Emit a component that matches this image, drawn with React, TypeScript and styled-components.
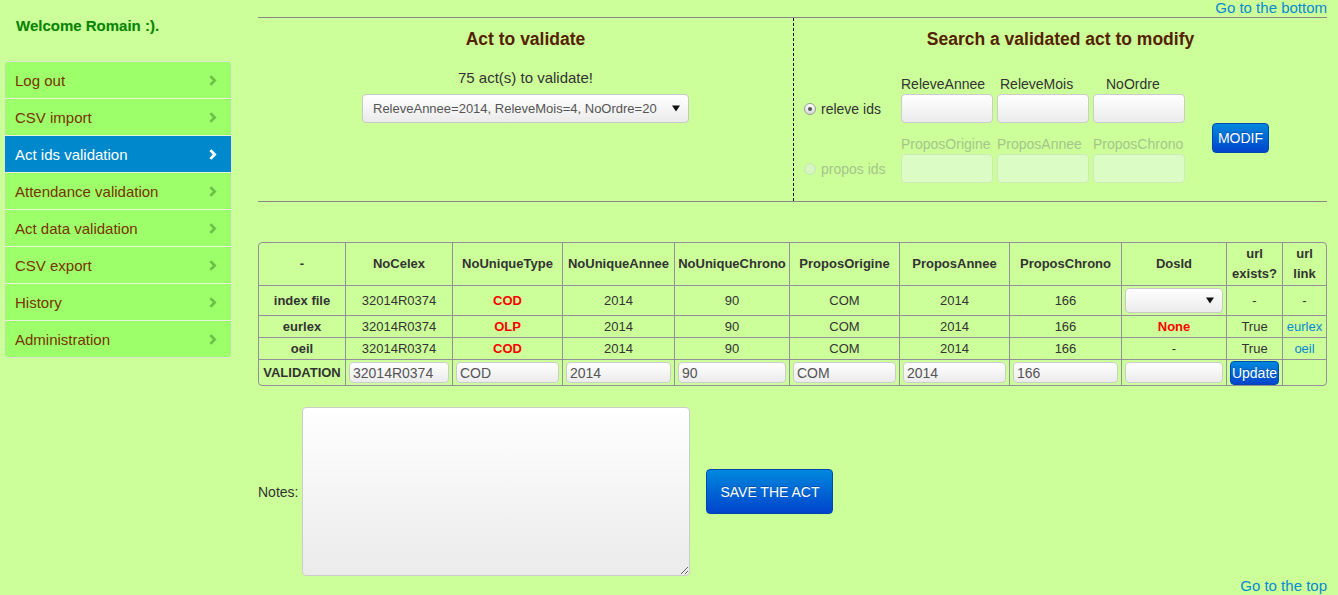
import React from 'react';
import styled, { createGlobalStyle } from 'styled-components';

const GlobalStyle = createGlobalStyle`
  html, body { margin: 0; padding: 0; background: #ccff99; }
  body {
    font-family: "Liberation Sans", Arial, sans-serif;
    font-size: 14px;
    color: #333;
  }
  *, *::before, *::after { box-sizing: border-box; }
`;

const Page = styled.div`
  display: flex;
  align-items: flex-start;
  width: 1338px;
  min-height: 595px;
`;

/* ---------- Sidebar ---------- */
const Sidebar = styled.aside`
  width: 228px;
  margin-left: 4px;
  flex-shrink: 0;
`;

const Welcome = styled.div`
  margin: 16px 0 0 12px;
  height: 20px;
  line-height: 20px;
  font-size: 15px;
  font-weight: bold;
  color: #0b820b;
  text-shadow: 0 0 1px rgba(120, 220, 80, 0.6);
`;

const Nav = styled.nav`
  margin-top: 25px;
  border: 1px solid #dde6d2;
  border-radius: 4px;
  overflow: hidden;
`;

const NavItem = styled.a<{ $active?: boolean }>`
  display: flex;
  align-items: center;
  justify-content: space-between;
  height: 37px;
  padding: 0 14px 0 10px;
  border-top: 1px solid #e6f7d8;
  background: ${(p) => (p.$active ? '#0088cc' : '#9dff6a')};
  color: ${(p) => (p.$active ? '#ffffff' : '#773300')};
  font-size: 15px;
  text-decoration: none;
  cursor: pointer;
  &:first-child {
    border-top: none;
    height: 36px;
  }
`;

const Chevron = ({ color }: { color: string }) => (
  <svg width="8" height="11" viewBox="0 0 8 11" aria-hidden="true">
    <path d="M0.4 2.1 L2.4 0.2 L7.6 5.5 L2.4 10.8 L0.4 8.9 L3.7 5.5 Z" fill={color} />
  </svg>
);

/* ---------- Main ---------- */
const Main = styled.main`
  margin-left: 26px;
  width: 1069px;
  flex-shrink: 0;
`;

const TopLinkRow = styled.div`
  height: 17px;
  text-align: right;
  line-height: 15px;
`;

const Link = styled.a`
  color: #0a8ad2;
  font-size: 15px;
  text-decoration: none;
  cursor: pointer;
`;

const SearchSection = styled.section`
  display: grid;
  grid-template-columns: 535px 1fr;
  height: 185px;
  border-top: 1px solid #888;
  border-bottom: 1px solid #888;
`;

const LeftCol = styled.div`
  padding-top: 11px;
  text-align: center;
`;

const RightCol = styled.div`
  padding-top: 11px;
  border-left: 1px dashed #111;
`;

const Heading = styled.h3`
  margin: 0;
  font-size: 17.5px;
  line-height: 20px;
  font-weight: bold;
  color: #552200;
  text-align: center;
`;

const Count = styled.p`
  margin: 20px 0 0;
  font-size: 15px;
  line-height: 18px;
  color: #333;
`;

const SelectBox = styled.div<{ $width?: number; $height: number }>`
  display: flex;
  align-items: center;
  justify-content: space-between;
  width: ${(p) => (p.$width ? `${p.$width}px` : '100%')};
  height: ${(p) => p.$height}px;
  padding: 0 8px 0 10px;
  border: 1px solid #c8c8c8;
  border-radius: 4px;
  background: linear-gradient(#ffffff, #ebebeb);
  color: #555;
  font-size: 13px;
  text-align: left;
  cursor: pointer;
`;

const MainSelect = styled(SelectBox)`
  margin: 7px auto 0;
`;

const CellSelect = styled(SelectBox)`
  margin: 2px 0;
`;

const Arrow = () => (
  <svg width="8" height="7" viewBox="0 0 8 7" aria-hidden="true">
    <path d="M0 0.5 H8 L4 6.5 Z" fill="#111" />
  </svg>
);

const FormGrid = styled.div`
  display: grid;
  grid-template-columns: 94px 92px 92px 92px auto;
  grid-template-rows: 20px 29px 31px 29px;
  column-gap: 4px;
  justify-content: start;
  margin: 25px 0 0 9px;
`;

const FieldLabel = styled.div<{ $row: number; $col: number; $indent: number; $disabled?: boolean }>`
  grid-row: ${(p) => p.$row};
  grid-column: ${(p) => p.$col};
  align-self: end;
  height: 20px;
  line-height: 20px;
  padding-left: ${(p) => p.$indent}px;
  font-size: 14px;
  white-space: nowrap;
  color: ${(p) => (p.$disabled ? '#a6c58c' : '#333')};
`;

const TextField = styled.input<{ $row: number; $col: number }>`
  grid-row: ${(p) => p.$row};
  grid-column: ${(p) => p.$col};
  width: 92px;
  height: 29px;
  border: 1px solid #cccccc;
  border-radius: 4px;
  background: linear-gradient(#ffffff, #ebebeb);
  font-family: inherit;
  font-size: 14px;
  &:disabled {
    border-color: #cfeab9;
    background: #dcfcc5;
  }
`;

const RadioOption = styled.label<{ $row: number; $disabled?: boolean }>`
  grid-row: ${(p) => p.$row};
  grid-column: 1;
  display: flex;
  align-items: center;
  gap: 5px;
  font-size: 14px;
  color: ${(p) => (p.$disabled ? '#a6c58c' : '#333')};
  white-space: nowrap;
`;

const RadioDot = styled.span<{ $checked?: boolean; $disabled?: boolean }>`
  position: relative;
  width: 12px;
  height: 12px;
  margin-left: 1px;
  border-radius: 50%;
  border: 1px solid ${(p) => (p.$disabled ? '#c6e6b0' : '#9a9a9a')};
  background: ${(p) => (p.$disabled ? '#d6f5c0' : 'linear-gradient(#ffffff, #d8d8d8)')};
  &::after {
    content: '';
    display: ${(p) => (p.$checked ? 'block' : 'none')};
    position: absolute;
    left: 3px;
    top: 3px;
    width: 4px;
    height: 4px;
    border-radius: 50%;
    background: #555;
  }
`;

const BlueButton = styled.button`
  border: 1px solid #0048b0;
  border-radius: 4px;
  background: linear-gradient(#0088dd, #0044cc);
  color: #ffffff;
  font-family: "Liberation Sans", Arial, sans-serif;
  font-size: 14px;
  text-shadow: 0 -1px 0 rgba(0, 0, 0, 0.25);
  cursor: pointer;
  padding: 0;
`;

const ModifButton = styled(BlueButton)`
  grid-row: 3;
  grid-column: 5;
  align-self: start;
  width: 57px;
  height: 30px;
  margin-left: 23px;
`;

/* ---------- Table ---------- */
const Table = styled.table`
  margin-top: 40px;
  width: 1069px;
  table-layout: fixed;
  border-collapse: separate;
  border-spacing: 0;
  border: 1px solid #938f9b;
  border-radius: 4px;
  font-size: 13px;
  color: #333;
`;

const Th = styled.th<{ $w: number }>`
  width: ${(p) => p.$w}px;
  padding: 1px 2px;
  line-height: 20px;
  font-weight: bold;
  text-align: center;
  vertical-align: middle;
  border-left: 1px solid #938f9b;
  &:first-child { border-left: none; }
`;

const Td = styled.td<{ $bold?: boolean; $red?: boolean }>`
  padding: 0 3px;
  line-height: 21px;
  text-align: center;
  vertical-align: middle;
  border-left: 1px solid #938f9b;
  border-top: 1px solid #938f9b;
  font-weight: ${(p) => (p.$bold || p.$red ? 'bold' : 'normal')};
  color: ${(p) => (p.$red ? '#ff0000' : '#333')};
  white-space: nowrap;
  overflow: hidden;
  &:first-child { border-left: none; }
`;

const CellLink = styled.a`
  color: #0a8ad2;
  text-decoration: none;
`;

const CellInput = styled.input`
  display: block;
  width: 100%;
  height: 21px;
  margin: 2px 0;
  padding: 0 3px;
  border: 1px solid #cccccc;
  border-radius: 4px;
  background: linear-gradient(#ffffff, #ebebeb);
  font-family: inherit;
  font-size: 14px;
  color: #555;
`;

const UpdateButton = styled(BlueButton)`
  display: block;
  width: 49px;
  height: 24px;
  margin: 0 auto;
`;

/* ---------- Notes ---------- */
const NotesRow = styled.div`
  display: flex;
  align-items: center;
  margin-top: 21px;
`;

const NotesLabel = styled.label`
  font-size: 14px;
  margin-right: 4px;
`;

const NotesArea = styled.textarea`
  width: 388px;
  height: 169px;
  border: 1px solid #cccccc;
  border-radius: 4px;
  background: linear-gradient(#ffffff, #ebebeb);
  font-family: inherit;
  font-size: 14px;
`;

const SaveButton = styled(BlueButton)`
  width: 127px;
  height: 45px;
  margin-left: 16px;
`;

const BottomLinkRow = styled.div`
  margin-top: 1px;
  text-align: right;
  line-height: 18px;
`;

const navItems = [
  'Log out',
  'CSV import',
  'Act ids validation',
  'Attendance validation',
  'Act data validation',
  'CSV export',
  'History',
  'Administration',
];

const columns: { label: React.ReactNode; w: number }[] = [
  { label: '-', w: 86 },
  { label: 'NoCelex', w: 107 },
  { label: 'NoUniqueType', w: 110 },
  { label: 'NoUniqueAnnee', w: 112 },
  { label: 'NoUniqueChrono', w: 115 },
  { label: 'ProposOrigine', w: 110 },
  { label: 'ProposAnnee', w: 110 },
  { label: 'ProposChrono', w: 112 },
  { label: 'DosId', w: 105 },
  { label: <>url<br />exists?</>, w: 56 },
  { label: <>url<br />link</>, w: 44 },
];

const dataRows = [
  { name: 'eurlex', type: 'OLP', dos: 'None', exists: 'True', link: 'eurlex' },
  { name: 'oeil', type: 'COD', dos: '-', exists: 'True', link: 'oeil' },
];

const validation = ['32014R0374', 'COD', '2014', '90', 'COM', '2014', '166', ''];

export default function App() {
  return (
    <>
      <GlobalStyle />
      <Page>
        <Sidebar>
          <Welcome>Welcome Romain :).</Welcome>
          <Nav>
            {navItems.map((item, i) => (
              <NavItem key={item} $active={i === 2}>
                <span>{item}</span>
                <Chevron color={i === 2 ? '#ffffff' : '#6cc247'} />
              </NavItem>
            ))}
          </Nav>
        </Sidebar>

        <Main>
          <TopLinkRow>
            <Link>Go to the bottom</Link>
          </TopLinkRow>

          <SearchSection>
            <LeftCol>
              <Heading>Act to validate</Heading>
              <Count>75 act(s) to validate!</Count>
              <MainSelect $width={327} $height={29}>
                <span>ReleveAnnee=2014, ReleveMois=4, NoOrdre=20</span>
                <Arrow />
              </MainSelect>
            </LeftCol>
            <RightCol>
              <Heading>Search a validated act to modify</Heading>
              <FormGrid>
                <FieldLabel $row={1} $col={2} $indent={0}>ReleveAnnee</FieldLabel>
                <FieldLabel $row={1} $col={3} $indent={3}>ReleveMois</FieldLabel>
                <FieldLabel $row={1} $col={4} $indent={13}>NoOrdre</FieldLabel>
                <RadioOption $row={2}>
                  <RadioDot $checked />
                  releve ids
                </RadioOption>
                <TextField $row={2} $col={2} />
                <TextField $row={2} $col={3} />
                <TextField $row={2} $col={4} />
                <FieldLabel $row={3} $col={2} $indent={0} $disabled>ProposOrigine</FieldLabel>
                <FieldLabel $row={3} $col={3} $indent={0} $disabled>ProposAnnee</FieldLabel>
                <FieldLabel $row={3} $col={4} $indent={0} $disabled>ProposChrono</FieldLabel>
                <ModifButton>MODIF</ModifButton>
                <RadioOption $row={4} $disabled>
                  <RadioDot $disabled />
                  propos ids
                </RadioOption>
                <TextField $row={4} $col={2} disabled />
                <TextField $row={4} $col={3} disabled />
                <TextField $row={4} $col={4} disabled />
              </FormGrid>
            </RightCol>
          </SearchSection>

          <Table>
            <thead>
              <tr>
                {columns.map((c, i) => (
                  <Th key={i} $w={c.w}>{c.label}</Th>
                ))}
              </tr>
            </thead>
            <tbody>
              <tr>
                <Td $bold>index file</Td>
                <Td>32014R0374</Td>
                <Td $red>COD</Td>
                <Td>2014</Td>
                <Td>90</Td>
                <Td>COM</Td>
                <Td>2014</Td>
                <Td>166</Td>
                <Td>
                  <CellSelect $height={25}>
                    <span />
                    <Arrow />
                  </CellSelect>
                </Td>
                <Td>-</Td>
                <Td>-</Td>
              </tr>
              {dataRows.map((r) => (
                <tr key={r.name}>
                  <Td $bold>{r.name}</Td>
                  <Td>32014R0374</Td>
                  <Td $red>{r.type}</Td>
                  <Td>2014</Td>
                  <Td>90</Td>
                  <Td>COM</Td>
                  <Td>2014</Td>
                  <Td>166</Td>
                  <Td $red={r.dos === 'None'}>{r.dos}</Td>
                  <Td>{r.exists}</Td>
                  <Td>
                    <CellLink>{r.link}</CellLink>
                  </Td>
                </tr>
              ))}
              <tr>
                <Td $bold>VALIDATION</Td>
                {validation.map((v, i) => (
                  <Td key={i}>
                    <CellInput defaultValue={v} />
                  </Td>
                ))}
                <Td>
                  <UpdateButton>Update</UpdateButton>
                </Td>
                <Td />
              </tr>
            </tbody>
          </Table>

          <NotesRow>
            <NotesLabel>Notes:</NotesLabel>
            <NotesArea />
            <SaveButton>SAVE THE ACT</SaveButton>
          </NotesRow>

          <BottomLinkRow>
            <Link>Go to the top</Link>
          </BottomLinkRow>
        </Main>
      </Page>
    </>
  );
}
